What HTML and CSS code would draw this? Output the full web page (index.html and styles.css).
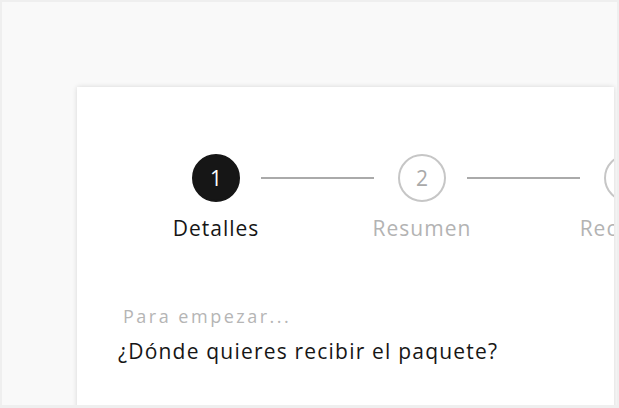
FILE: index.html
```html
<!DOCTYPE html>
<html lang="es">
<head>
<meta charset="utf-8">
<link rel="stylesheet" href="styles.css">
</head>
<body>
<div class="frame">
  <div class="card">
    <div class="steps">
      <div class="step">
        <div class="circle active">1</div>
        <div class="label active">Detalles</div>
      </div>
      <div class="line"></div>
      <div class="step">
        <div class="circle">2</div>
        <div class="label">Resumen</div>
      </div>
      <div class="line"></div>
      <div class="step">
        <div class="circle">3</div>
        <div class="label">Recogida</div>
      </div>
    </div>
    <div class="intro">
      <p class="kicker">Para empezar...</p>
      <h2 class="question">¿Dónde quieres recibir el paquete?</h2>
    </div>
  </div>
</div>
</body>
</html>
```
FILE: styles.css
```css
html, body {
  margin: 0;
  padding: 0;
}
body {
  font-family: "Open Sans", Lato, sans-serif;
  background: #f9f9f9;
}
.frame {
  box-sizing: border-box;
  width: 619px;
  height: 408px;
  border: 2px solid #efefef;
  border-bottom-width: 3px;
  background: #f9f9f9;
  overflow: hidden;
  padding: 85px 0 0 75px;
}
.card {
  box-sizing: border-box;
  width: 537px;
  height: 340px;
  background: #ffffff;
  box-shadow: 0 0 5px rgba(0, 0, 0, 0.14);
  overflow: hidden;
  padding: 67px 0 0 46px;
}
.steps {
  display: flex;
  align-items: flex-start;
  margin-left: 69px;
}
.step {
  width: 48px;
  display: flex;
  flex-direction: column;
  align-items: center;
  flex-shrink: 0;
}
.circle {
  box-sizing: border-box;
  width: 48px;
  height: 48px;
  border-radius: 50%;
  border: 2px solid #c6c6c6;
  color: #a9a9a9;
  font-size: 21px;
  display: flex;
  align-items: center;
  justify-content: center;
}
.circle.active {
  background: #161616;
  border-color: #161616;
  color: #ffffff;
}
.label {
  width: 140px;
  text-align: center;
  margin-top: 12px;
  font-size: 21px;
  line-height: 28px;
  letter-spacing: 1px;
  color: #b3b3b3;
  white-space: nowrap;
}
.label.active {
  color: #161616;
}
.line {
  flex-shrink: 0;
  width: 113px;
  height: 2px;
  background: #aaaaaa;
  margin: 23px 24px 0 21px;
}
.intro {
  margin-top: 62px;
}
.kicker {
  margin: 0;
  font-size: 18px;
  line-height: 24px;
  letter-spacing: 2.5px;
  color: #b5b5b5;
  font-weight: 400;
}
.question {
  margin: 9px 0 0 -5px;
  font-size: 21px;
  line-height: 28px;
  font-weight: 400;
  letter-spacing: 1.2px;
  color: #161616;
}
```
